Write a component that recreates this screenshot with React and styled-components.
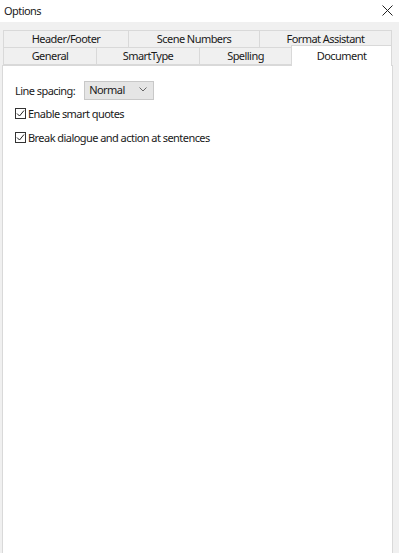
import React from "react";
import styled, { createGlobalStyle } from "styled-components";

const Global = createGlobalStyle`
  html, body { margin: 0; padding: 0; }
  body {
    background: #f0f0f0;
    font-family: "Noto Sans", "Liberation Sans", sans-serif;
    font-size: 11px;
    letter-spacing: -0.55px;
    color: #1a1a1a;
  }
`;

const Window = styled.div`
  width: 399px;
  height: 553px;
  display: flex;
  flex-direction: column;
  background: #f0f0f0;
  overflow: hidden;
`;

const TitleBar = styled.div`
  height: 22px;
  background: #ffffff;
  display: flex;
  align-items: center;
  justify-content: space-between;
  padding: 0 4px 2px 4px;
  box-sizing: border-box;
`;

const Close = styled.svg`
  width: 11px;
  height: 11px;
  margin-right: 2px;
`;

const Body = styled.div`
  flex: 1;
  display: flex;
  flex-direction: column;
  padding: 8px 6px 0 2px;
`;

const Tabs = styled.div`
  display: flex;
  flex-direction: column;
  margin-left: 1px;
`;

const TabRow = styled.div`
  display: flex;
  height: ${(p) => p.$h}px;
  align-items: flex-end;
`;

const Tab = styled.div`
  width: ${(p) => p.$w}px;
  height: 100%;
  box-sizing: border-box;
  border: 1px solid #d9d9d9;
  border-right: ${(p) => (p.$last ? "1px solid #d9d9d9" : "none")};
  border-bottom: ${(p) => (p.$noBottom ? "none" : "1px solid #d9d9d9")};
  background: #f0f0f0;
  display: flex;
  align-items: center;
  justify-content: center;
  padding-bottom: 1px;
`;

const ActiveTab = styled.div`
  width: ${(p) => p.$w}px;
  height: 21px;
  margin-bottom: -1px;
  box-sizing: border-box;
  background: #ffffff;
  border: 1px solid #d9d9d9;
  border-bottom: none;
  position: relative;
  z-index: 1;
  display: flex;
  align-items: flex-start;
  justify-content: center;
  padding-top: 2px;
`;

const Panel = styled.div`
  flex: 1;
  background: #ffffff;
  border: 1px solid #d9d9d9;
  border-bottom: none;
  padding: 13px 12px;
  display: flex;
  flex-direction: column;
`;

const Row = styled.div`
  display: flex;
  align-items: center;
  gap: ${(p) => p.$gap || 0}px;
  height: ${(p) => p.$h}px;
`;

const Select = styled.div`
  width: 70px;
  height: 19px;
  box-sizing: border-box;
  background: #e5e5e5;
  border: 1px solid #c8c8c8;
  display: flex;
  align-items: center;
  justify-content: space-between;
  padding: 0 6px 1px 4px;
`;

const Chevron = styled.svg`
  width: 8px;
  height: 5px;
`;

const Box = styled.span`
  width: 11px;
  height: 11px;
  box-sizing: border-box;
  border: 1px solid #333;
  background: #fff;
  display: inline-flex;
  align-items: center;
  justify-content: center;
  margin-right: 2px;
`;

const Check = ({ label }) => (
  <Row $h={24}>
    <Box>
      <svg width="9" height="9" viewBox="0 0 9 9">
        <path d="M1 4.5 L3.5 7 L8 1.5" fill="none" stroke="#222" strokeWidth="1" />
      </svg>
    </Box>
    <span>{label}</span>
  </Row>
);

export default function App() {
  return (
    <>
      <Global />
      <Window>
        <TitleBar>
          <span>Options</span>
          <Close viewBox="0 0 11 11">
            <path d="M0.5 0.5 L10.5 10.5 M10.5 0.5 L0.5 10.5" stroke="#222" strokeWidth="1" />
          </Close>
        </TitleBar>
        <Body>
          <Tabs>
            <TabRow $h={17}>
              <Tab $w={125} $noBottom>Header/Footer</Tab>
              <Tab $w={131} $noBottom>Scene Numbers</Tab>
              <Tab $w={133} $noBottom $last>Format Assistant</Tab>
            </TabRow>
            <TabRow $h={18}>
              <Tab $w={93}>General</Tab>
              <Tab $w={103}>SmartType</Tab>
              <Tab $w={92}>Spelling</Tab>
              <ActiveTab $w={101}>Document</ActiveTab>
            </TabRow>
          </Tabs>
          <Panel>
            <Row $h={22} $gap={9}>
              <span>Line spacing:</span>
              <Select>
                <span>Normal</span>
                <Chevron viewBox="0 0 8 5">
                  <path d="M0.5 0.5 L4 4 L7.5 0.5" fill="none" stroke="#666" strokeWidth="1" />
                </Chevron>
              </Select>
            </Row>
            <Check label="Enable smart quotes" />
            <Check label="Break dialogue and action at sentences" />
          </Panel>
        </Body>
      </Window>
    </>
  );
}
